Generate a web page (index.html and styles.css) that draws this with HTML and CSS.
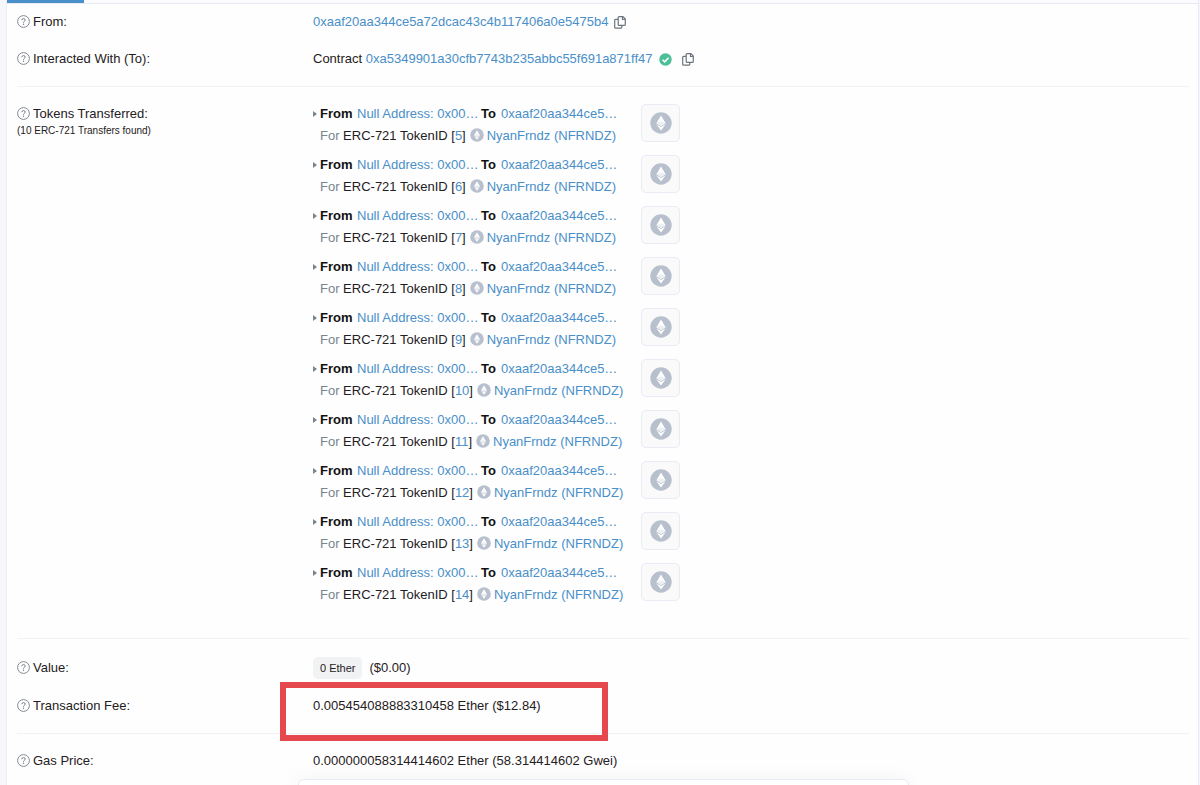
FILE: index.html
```html
<!DOCTYPE html>
<html lang="en">
<head>
<meta charset="utf-8">
<title>Transaction Details</title>
<link rel="stylesheet" href="styles.css">
</head>
<body>
<svg class="sprite" aria-hidden="true">
  <symbol id="help" viewBox="0 0 13 13"><circle cx="6.5" cy="6.5" r="5.9" fill="none" stroke="#777e89" stroke-width=".9"/><path d="M4.8 5.2Q4.9 3.6 6.5 3.6T8.2 5.1Q8.2 5.9 7.3 6.4Q6.5 6.8 6.5 7.7" fill="none" stroke="#777e89" stroke-width="1"/><circle cx="6.5" cy="9.3" r=".7" fill="#777e89"/></symbol>
  <symbol id="copy" viewBox="0 0 12 13"><path d="M5.6.7H8.9L11.3 3.1V8.4Q11.3 9.4 10.3 9.4H5.2Q4.2 9.4 4.2 8.4V1.7Q4.2.7 5.2.7ZM8.5.9V3.5H11.1M4 3.3H1.7Q.7 3.3.7 4.3V11.2Q.7 12.2 1.7 12.2H6.8Q7.8 12.2 7.8 11.2V9.6" fill="none" stroke="#6c757e" stroke-width="1.2"/></symbol>
  <symbol id="check" viewBox="0 0 13 13"><circle cx="6.5" cy="6.5" r="6.2" fill="#4bbf98"/><path d="M3.6 6.7 5.7 8.8 9.6 4.7" fill="none" stroke="#fff" stroke-width="1.6"/></symbol>
  <symbol id="eth" viewBox="0 0 22 22"><circle cx="11" cy="11" r="10.7" fill="#b9c0cd"/><path d="M11 3.6 15.6 11.2 11 13.9 6.4 11.2Z" fill="#fff"/><path d="M6.4 12.2 11 14.9 15.6 12.2 11 18.6Z" fill="#fff"/><path d="M6.4 11.2 11 9.3 15.6 11.2 11 13.9Z" fill="#eceff3"/></symbol>
</svg>
<main class="panel">
  <div class="tabs"><span class="tab-active"></span></div>
  <dl class="details">
    <div class="row row-from">
      <dt><svg class="help"><use href="#help"/></svg>From:</dt>
      <dd class="line"><a href="#">0xaaf20aa344ce5a72dcac43c4b117406a0e5475b4</a><button class="copy" aria-label="Copy address"><svg><use href="#copy"/></svg></button></dd>
    </div>
    <div class="row row-to">
      <dt><svg class="help"><use href="#help"/></svg>Interacted With (To):</dt>
      <dd class="line"><span>Contract <a href="#">0xa5349901a30cfb7743b235abbc55f691a871ff47</a></span><svg class="check"><use href="#check"/></svg><button class="copy copy-last" aria-label="Copy address"><svg><use href="#copy"/></svg></button></dd>
    </div>
    <div class="row row-tokens">
      <dt><svg class="help"><use href="#help"/></svg>Tokens Transferred:<small>(10 ERC-721 Transfers found)</small></dt>
      <dd>
        <ul class="transfers">
          <li><div class="transfer"><div class="parties"><i class="caret"></i><b>From</b><a href="#">Null Address: 0x00…</a><b>To</b><a href="#">0xaaf20aa344ce5…</a></div><div class="token"><span class="muted">For</span> ERC-721 TokenID [<a href="#">5</a>]<svg class="coin"><use href="#eth"/></svg><a href="#">NyanFrndz (NFRNDZ)</a></div></div><a class="thumb" href="#" aria-label="Token 5"><svg><use href="#eth"/></svg></a></li>
          <li><div class="transfer"><div class="parties"><i class="caret"></i><b>From</b><a href="#">Null Address: 0x00…</a><b>To</b><a href="#">0xaaf20aa344ce5…</a></div><div class="token"><span class="muted">For</span> ERC-721 TokenID [<a href="#">6</a>]<svg class="coin"><use href="#eth"/></svg><a href="#">NyanFrndz (NFRNDZ)</a></div></div><a class="thumb" href="#" aria-label="Token 6"><svg><use href="#eth"/></svg></a></li>
          <li><div class="transfer"><div class="parties"><i class="caret"></i><b>From</b><a href="#">Null Address: 0x00…</a><b>To</b><a href="#">0xaaf20aa344ce5…</a></div><div class="token"><span class="muted">For</span> ERC-721 TokenID [<a href="#">7</a>]<svg class="coin"><use href="#eth"/></svg><a href="#">NyanFrndz (NFRNDZ)</a></div></div><a class="thumb" href="#" aria-label="Token 7"><svg><use href="#eth"/></svg></a></li>
          <li><div class="transfer"><div class="parties"><i class="caret"></i><b>From</b><a href="#">Null Address: 0x00…</a><b>To</b><a href="#">0xaaf20aa344ce5…</a></div><div class="token"><span class="muted">For</span> ERC-721 TokenID [<a href="#">8</a>]<svg class="coin"><use href="#eth"/></svg><a href="#">NyanFrndz (NFRNDZ)</a></div></div><a class="thumb" href="#" aria-label="Token 8"><svg><use href="#eth"/></svg></a></li>
          <li><div class="transfer"><div class="parties"><i class="caret"></i><b>From</b><a href="#">Null Address: 0x00…</a><b>To</b><a href="#">0xaaf20aa344ce5…</a></div><div class="token"><span class="muted">For</span> ERC-721 TokenID [<a href="#">9</a>]<svg class="coin"><use href="#eth"/></svg><a href="#">NyanFrndz (NFRNDZ)</a></div></div><a class="thumb" href="#" aria-label="Token 9"><svg><use href="#eth"/></svg></a></li>
          <li><div class="transfer"><div class="parties"><i class="caret"></i><b>From</b><a href="#">Null Address: 0x00…</a><b>To</b><a href="#">0xaaf20aa344ce5…</a></div><div class="token"><span class="muted">For</span> ERC-721 TokenID [<a href="#">10</a>]<svg class="coin"><use href="#eth"/></svg><a href="#">NyanFrndz (NFRNDZ)</a></div></div><a class="thumb" href="#" aria-label="Token 10"><svg><use href="#eth"/></svg></a></li>
          <li><div class="transfer"><div class="parties"><i class="caret"></i><b>From</b><a href="#">Null Address: 0x00…</a><b>To</b><a href="#">0xaaf20aa344ce5…</a></div><div class="token"><span class="muted">For</span> ERC-721 TokenID [<a href="#">11</a>]<svg class="coin"><use href="#eth"/></svg><a href="#">NyanFrndz (NFRNDZ)</a></div></div><a class="thumb" href="#" aria-label="Token 11"><svg><use href="#eth"/></svg></a></li>
          <li><div class="transfer"><div class="parties"><i class="caret"></i><b>From</b><a href="#">Null Address: 0x00…</a><b>To</b><a href="#">0xaaf20aa344ce5…</a></div><div class="token"><span class="muted">For</span> ERC-721 TokenID [<a href="#">12</a>]<svg class="coin"><use href="#eth"/></svg><a href="#">NyanFrndz (NFRNDZ)</a></div></div><a class="thumb" href="#" aria-label="Token 12"><svg><use href="#eth"/></svg></a></li>
          <li><div class="transfer"><div class="parties"><i class="caret"></i><b>From</b><a href="#">Null Address: 0x00…</a><b>To</b><a href="#">0xaaf20aa344ce5…</a></div><div class="token"><span class="muted">For</span> ERC-721 TokenID [<a href="#">13</a>]<svg class="coin"><use href="#eth"/></svg><a href="#">NyanFrndz (NFRNDZ)</a></div></div><a class="thumb" href="#" aria-label="Token 13"><svg><use href="#eth"/></svg></a></li>
          <li><div class="transfer"><div class="parties"><i class="caret"></i><b>From</b><a href="#">Null Address: 0x00…</a><b>To</b><a href="#">0xaaf20aa344ce5…</a></div><div class="token"><span class="muted">For</span> ERC-721 TokenID [<a href="#">14</a>]<svg class="coin"><use href="#eth"/></svg><a href="#">NyanFrndz (NFRNDZ)</a></div></div><a class="thumb" href="#" aria-label="Token 14"><svg><use href="#eth"/></svg></a></li>
        </ul>
      </dd>
    </div>
    <div class="row row-value">
      <dt><svg class="help"><use href="#help"/></svg>Value:</dt>
      <dd class="line"><span class="badge">0 Ether</span><span>($0.00)</span></dd>
    </div>
    <div class="row row-fee">
      <dt><svg class="help"><use href="#help"/></svg>Transaction Fee:</dt>
      <dd class="fee">0.005454088883310458 Ether ($12.84)<span class="highlight"></span></dd>
    </div>
    <div class="row row-gas">
      <dt><svg class="help"><use href="#help"/></svg>Gas Price:</dt>
      <dd>0.000000058314414602 Ether (58.314414602 Gwei)</dd>
    </div>
  </dl>
</main>
<div class="notice"></div>
</body>
</html>
```
FILE: styles.css
```css
* { box-sizing: border-box; }
body {
  margin: 0;
  height: 100vh;
  overflow: hidden;
  background: #f6f7fa;
  color: #1e2022;
  font: 13px/22px "Liberation Sans", Arial, sans-serif;
}
a { color: #498fc9; text-decoration: none; }
svg { display: block; }
.sprite { position: absolute; width: 0; height: 0; }
.panel {
  margin: 0 1px 0 6px;
  min-height: 100vh;
  background: #fefefe;
  border-left: 1px solid #eceef3;
  border-right: 1px solid #e7eaf3;
}
.tabs { height: 4px; background: #fbfbfd; border-bottom: 1px solid #e7eaf3; }
.tab-active { display: block; width: 77px; height: 3px; background: #498fc9; }
.details { margin: 0; padding: 0 9px 0 10px; }
.row { display: flex; border-bottom: 0 solid #f0f2f4; }
dt { flex: 0 0 296px; }
dt .help { float: left; width: 13px; height: 13px; margin: 4px 3px 0 0; }
dt small { display: block; font-size: 10px; line-height: 12px; }
dd { margin: 0; flex: 1; min-width: 0; }
.line { display: flex; align-items: center; }
.row-from { padding: 7px 0; }
.row-to { padding: 8px 0 16px; border-bottom-width: 1px; }
.row-tokens { padding: 16px 0 32px; border-bottom-width: 1px; }
.row-value { padding: 18px 0 8px; }
.row-fee { padding: 8px 0 16px; border-bottom-width: 1px; }
.row-gas { padding: 16px 0; }
.copy { display: block; width: 12px; height: 13px; margin-left: 6px; padding: 0; border: 0; background: none; }
.copy-last { margin-left: 10px; }
.copy svg { width: 12px; height: 13px; }
.check { width: 13px; height: 13px; margin-left: 6px; }
.transfers { display: grid; gap: 7px; margin: 0; padding: 0; list-style: none; }
.transfers li { display: flex; align-items: flex-start; }
.transfer { flex: 0 0 328px; }
.parties { display: grid; grid-template-columns: 7px 37px 124px 20px auto; align-items: center; color: #111; white-space: nowrap; }
.caret { width: 0; border: 3px solid transparent; border-left: 4px solid #77838f; border-right: 0; }
.token { display: flex; padding-left: 7px; white-space: pre; }
.muted { color: #77838f; }
.coin { width: 14px; height: 14px; margin: 3px 3px 0 4px; }
.thumb { display: grid; place-items: center; width: 39px; height: 38px; margin-top: 1px; border: 1px solid #e9ebf5; border-radius: 5px; background: #fafafb; }
.thumb svg { width: 22px; height: 22px; }
.badge { margin-right: 7px; padding: 0 7px; border-radius: 5px; background: #f1f2f4; font-size: 11px; }
.fee { position: relative; }
.highlight { position: absolute; top: -13px; left: -33px; width: 328px; height: 59px; border: 6px solid #e5484d; }
.notice {
  position: fixed;
  bottom: -8px;
  left: 298px;
  right: 291px;
  height: 14px;
  border: 1px solid #e7eaf3;
  border-radius: 6px;
  background: #fff;
  box-shadow: 0 0 16px rgba(140, 152, 164, .12);
}
```
